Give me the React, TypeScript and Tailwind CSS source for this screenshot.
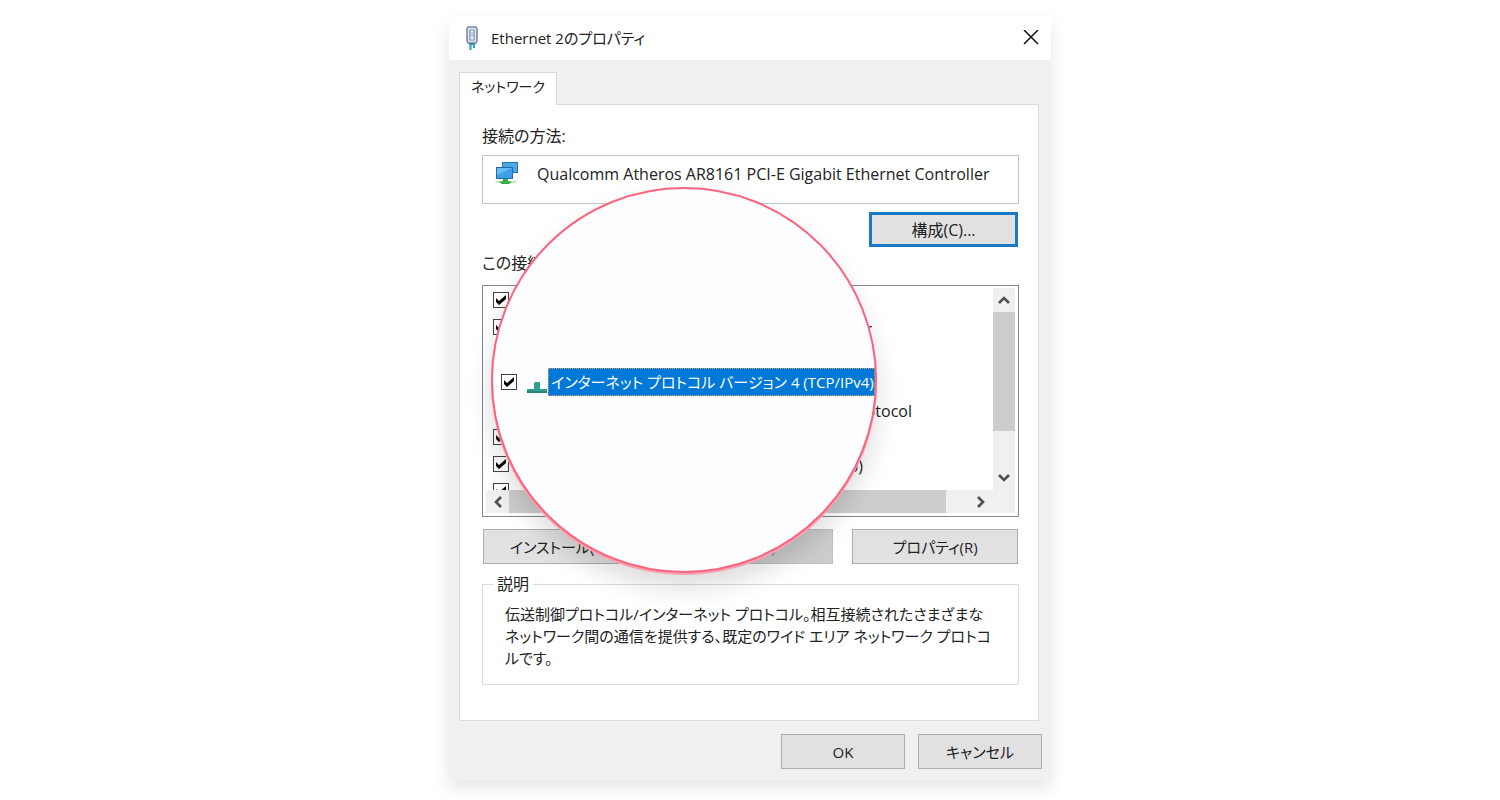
import React, { useState } from 'react';
import clsx from 'clsx';

type NetComponent = {
  id: string;
  name?: string;
  width?: string;
  checkable: boolean;
};

const components: NetComponent[] = [
  { id: 'Client', checkable: true },
  { id: 'Driver', name: 'Microsoft Network Driver', width: 'w-[323px]', checkable: true },
  { id: 'Sharing', checkable: false },
  { id: 'IPv4', checkable: false },
  { id: 'Multiplexor', name: 'Microsoft Multiplexor Protocol', width: 'w-[363px]', checkable: false },
  { id: 'LLDP', checkable: true },
  { id: 'IPv6', name: 'インターネット プロトコル (TCP/IPv6)', width: 'w-[314px]', checkable: true },
  { id: 'Responder', checkable: true },
];

function PlugIcon() {
  return (
    <svg width="14" height="24" viewBox="0 0 14 24" fill="none">
      <path d="M3 1h8l1 2v12l-1 2H3l-1-2V3z" fill="#dfe5ef" stroke="#7b8aa5" strokeWidth="1.6" />
      <path d="M5 4h4v10H5z" fill="#f4f7fc" stroke="#7c8cb4" strokeWidth="1.2" />
      <path d="M7 6v5" stroke="#8d9cc4" />
      <path d="M4 17h6v2H4z" fill="#3f7f9f" />
      <path d="M5.5 18v6M9 18v4" stroke="#39a3c9" strokeWidth="2.2" />
    </svg>
  );
}

function AdapterIcon() {
  return (
    <svg width="24" height="24" viewBox="0 0 24 24">
      <path d="M7 1h16v11H7z" fill="#2572ad" />
      <path d="M8 2h14v9H8z" fill="#4ba9ea" />
      <path d="M1 6h17v12H1z" fill="#2469a6" />
      <path d="M2 7h15v10H2z" fill="#3d9fe8" />
      <path d="M2 7h15L2 14z" fill="#66bcf4" />
      <path d="M1 20h21l-2 2H0z" fill="#c4e5c4" />
      <path d="M8 18h5v2l4 1-3 2H7l-3-2 4-1z" fill="#3cab44" />
    </svg>
  );
}

function ProtocolIcon() {
  return (
    <svg width="20" height="24" viewBox="0 0 20 24">
      <path d="M7 13l1-1h5v7h7v4H0v-4h7z" fill="#2f9f8e" />
      <path d="M0 21h20v2H0z" fill="#27857a" />
    </svg>
  );
}

function Arrow({ className }: { className?: string }) {
  return (
    <svg className={className} width="12" height="8" viewBox="0 0 12 8" fill="none">
      <path d="M1 7l5-5 5 5" stroke="#505050" strokeWidth="2.6" />
    </svg>
  );
}

function CheckBox({ label }: { label: string }) {
  const [checked, setChecked] = useState(true);

  return (
    <span className="relative block size-4 shrink-0">
      <input
        type="checkbox"
        aria-label={label}
        checked={checked}
        onChange={() => setChecked(!checked)}
        className="block size-4 appearance-none border border-[#444] bg-white"
      />
      {checked && (
        <svg className="pointer-events-none absolute inset-0" width="16" height="16" viewBox="0 0 16 16">
          <path d="M3 6l3 3 7-6v4l-7 6-3-3z" fill="#000" />
        </svg>
      )}
    </span>
  );
}

function Button({ className, children }: { className?: string; children: React.ReactNode }) {
  return (
    <button className={clsx('h-[35px]', className || 'border border-[#adadad] bg-[#e1e1e1]')}>
      {children}
    </button>
  );
}

function ComponentList() {
  return (
    <div className="flex h-[232px] flex-col border border-[#828790] pr-[3px] pb-[3px]">
      <div className="flex min-h-0 flex-1">
        <div className="h-full min-w-0 flex-1 overflow-hidden">
          <ul className="flex h-[219px] flex-col pl-[10px] text-base">
            {components.map((item) => (
              <li key={item.id} className="flex flex-1 items-center">
                {item.checkable ? <CheckBox label={item.id} /> : <span className="w-4" />}
                {item.name && (
                  <span className={clsx('ml-10 pt-1 text-right leading-5 whitespace-nowrap', item.width)}>
                    {item.name}
                  </span>
                )}
              </li>
            ))}
          </ul>
        </div>
        <div className="mt-[2px] flex w-[22px] flex-col items-center bg-[#f0f0f0]">
          <button aria-label="上へ" className="flex h-6 w-full items-center justify-center">
            <Arrow />
          </button>
          <div className="h-[119px] w-full bg-[#cdcdcd]" />
          <button aria-label="下へ" className="mt-auto flex h-6 w-full items-center justify-center">
            <Arrow className="rotate-180" />
          </button>
        </div>
      </div>
      <div className="ml-[3px] flex h-[23px] bg-[#f0f0f0]">
        <button aria-label="左へ" className="flex w-[23px] items-center justify-center">
          <Arrow className="-rotate-90" />
        </button>
        <div className="w-[437px] bg-[#cdcdcd]" />
        <button aria-label="右へ" className="mr-[22px] ml-auto flex w-6 items-center justify-center">
          <Arrow className="rotate-90" />
        </button>
      </div>
    </div>
  );
}

// Magnified view of the selected protocol
function Lens() {
  return (
    <div className="absolute top-[171px] left-[42px] flex size-[386px] items-center overflow-hidden rounded-full border-2 border-[#f9657f] bg-[#fefdff] pt-1 shadow-[0_2px_0_#fba3b3,0_14px_26px_rgba(0,0,0,0.14)]">
      <div className="flex w-full items-center pl-2">
        <CheckBox label="インターネット プロトコル バージョン 4" />
        <span className="ml-[10px]">
          <ProtocolIcon />
        </span>
        <span className="ml-[1px] flex h-7 flex-1 items-center border border-dotted border-[#d9a066] bg-[#0078d7] pl-[2px] whitespace-nowrap text-white">
          インターネット プロトコル バージョン 4 (TCP/IPv4)
        </span>
      </div>
    </div>
  );
}

function App() {
  return (
    <div className="min-h-screen bg-white pt-4 pb-5 font-['Open_Sans','Noto_Sans_CJK_JP',sans-serif] text-[15px] leading-5 text-[#222] [font-feature-settings:'palt']">
      <div className="relative mx-auto max-w-[602px] bg-[#f0f0f0] shadow-[0_8px_16px_rgba(0,0,0,0.1)]">
        <header className="flex h-11 items-center bg-white pr-3 pl-4">
          <PlugIcon />
          <h1 className="ml-3">Ethernet 2のプロパティ</h1>
          <button aria-label="閉じる" className="ml-auto">
            <svg width="16" height="16" viewBox="0 0 16 16" fill="none">
              <path d="M1 0l14 14M15 0L1 14" stroke="#111" strokeWidth="1.5" />
            </svg>
          </button>
        </header>

        <div className="px-[10px] pt-3 pb-[11px]">
          <button className="relative z-10 -mb-px block h-[33px] w-[98px] border border-b-0 border-[#d9d9d9] bg-white pb-1 text-sm">
            ネットワーク
          </button>
          <section className="mr-[2px] border border-[#dcdcdc] bg-white pt-[21px] pr-[19px] pb-[35px] pl-[22px]">
            <p className="text-base leading-5">接続の方法:</p>
            <div className="mt-[9px] flex h-[49px] items-start border border-[#c6c6c6] pt-[5px] pl-3">
              <AdapterIcon />
              <span className="ml-[18px] pt-[3px] text-base leading-5 whitespace-nowrap">
                Qualcomm Atheros AR8161 PCI-E Gigabit Ethernet Controller
              </span>
            </div>
            <div className="mt-2 flex justify-end px-px">
              <Button className="w-[149px] border-3 border-[#1a79c4] bg-[#e1e1e1] text-base">構成(C)...</Button>
            </div>
            <p className="mt-[6px] mb-3 text-base leading-5">この接続は次の項目を使用します(O):</p>
            <ComponentList />
            <div className="mt-3 grid grid-cols-3 gap-[19px] px-px">
              <Button>インストール(N)...</Button>
              <Button className="border border-[#bfbfbf] bg-[#cccccc] text-[#838383]">削除(U)</Button>
              <Button>プロパティ(R)</Button>
            </div>
            <fieldset className="mt-[10px] h-[111px] border border-[#dcdcdc] px-[22px] pt-[9px]">
              <legend className="-ml-3 px-1 text-base leading-5">説明</legend>
              <p className="leading-[22px] whitespace-nowrap">
                伝送制御プロトコル/インターネット プロトコル。相互接続されたさまざまな
                <br />
                ネットワーク間の通信を提供する、既定のワイド エリア ネットワーク プロトコ
                <br />
                ルです。
              </p>
            </fieldset>
          </section>
          <footer className="mt-[13px] -mr-px flex justify-end gap-[13px]">
            <Button className="w-[124px] border border-[#adadad] bg-[#e1e1e1]">OK</Button>
            <Button className="w-[124px] border border-[#adadad] bg-[#e1e1e1]">キャンセル</Button>
          </footer>
        </div>

        <Lens />
      </div>
    </div>
  );
}

export default App;
